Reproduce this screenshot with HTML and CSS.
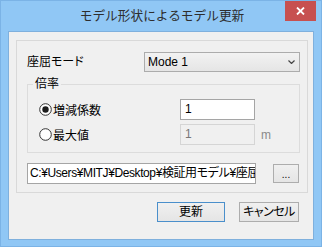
FILE: index.html
```html
<!DOCTYPE html>
<html lang="ja">
<head>
<meta charset="utf-8">
<title>モデル形状によるモデル更新</title>
<link rel="stylesheet" href="styles.css">
</head>
<body>
<div class="window">
  <div class="titlebar">
    <div class="title">モデル形状によるモデル更新</div>
    <div class="close">
      <svg width="9" height="8" viewBox="0 0 9 8"><path d="M1 0.5 L8 7.5 M8 0.5 L1 7.5" stroke="#fff" stroke-width="1.8" fill="none"/></svg>
    </div>
  </div>
  <div class="client">
    <div class="panel">
      <div class="mode-row">
        <span class="label">座屈モード</span>
        <div class="combo">
          <span class="combo-text">Mode 1</span>
          <svg class="chev" width="7" height="4" viewBox="0 0 7 4"><path d="M0.5 0.5 L3.5 3.5 L6.5 0.5" stroke="#444" stroke-width="1.2" fill="none"/></svg>
        </div>
      </div>
      <fieldset class="group">
        <legend class="legend">倍率</legend>
        <div class="opt first">
          <div class="opt-choice">
            <svg class="radio" width="13" height="13" viewBox="0 0 13 13"><circle cx="6.5" cy="6.5" r="5.8" fill="#fff" stroke="#333" stroke-width="1"/><circle cx="6.5" cy="6.5" r="3.2" fill="#1c1c1c"/></svg>
            <span class="opt-label">増減係数</span>
          </div>
          <div class="input">1</div>
        </div>
        <div class="opt">
          <div class="opt-choice">
            <svg class="radio" width="13" height="13" viewBox="0 0 13 13"><circle cx="6.5" cy="6.5" r="5.8" fill="#fff" stroke="#333" stroke-width="1"/></svg>
            <span class="opt-label">最大値</span>
          </div>
          <div class="input disabled">1</div>
          <span class="unit">m</span>
        </div>
      </fieldset>
      <div class="path-row">
        <div class="input path"><span class="path-text">C:¥Users¥MITJ¥Desktop¥検証用モデル¥座屈モード</span></div>
        <div class="btn browse">...</div>
      </div>
    </div>
    <div class="actions">
      <div class="btn default ok">更新</div>
      <div class="btn cancel">キャンセル</div>
    </div>
  </div>
</div>
</body>
</html>
```

FILE: styles.css
```css
html, body {
  margin: 0;
  padding: 0;
}
body {
  width: 322px;
  height: 247px;
  overflow: hidden;
  background: #90c7f5;
  font-family: "Liberation Sans", "Noto Sans CJK JP", sans-serif;
  font-size: 12px;
  font-feature-settings: "palt";
  color: #000;
}
.window {
  width: 322px;
  height: 247px;
  box-sizing: border-box;
  border: 1px solid #7bb3e6;
}
.titlebar {
  display: grid;
  height: 30px;
}
.title {
  grid-area: 1 / 1;
  justify-self: center;
  padding-top: 4px;
  padding-left: 2px;
  line-height: 20px;
  font-family: "Noto Sans CJK JP", sans-serif;
  font-feature-settings: normal;
  font-size: 12.7px;
  color: #2e2e2e;
}
.close {
  grid-area: 1 / 1;
  justify-self: end;
  align-self: start;
  width: 31px;
  height: 20px;
  margin-right: 5px;
  background: #c75050;
  display: flex;
  align-items: center;
  justify-content: center;
}
.client {
  box-sizing: border-box;
  margin-left: 7px;
  width: 306px;
  height: 209px;
  background: #f0f0f0;
  border: 1px solid #7fb0dd;
}
.panel {
  box-sizing: border-box;
  margin: 8px 0 0 7px;
  width: 292px;
  border: 1px solid #d9d9d9;
  padding: 11px 7px 8px 10px;
}
.mode-row {
  display: flex;
  align-items: center;
  height: 20px;
}
.label {
  line-height: 14px;
  white-space: nowrap;
}
.combo {
  margin-left: auto;
  box-sizing: border-box;
  width: 156px;
  height: 20px;
  border: 1px solid #acacac;
  background: linear-gradient(#f2f2f2, #e5e5e5);
  display: flex;
  align-items: center;
  padding: 0 4px 0 3px;
}
.combo-text {
  flex: 1;
}
.group {
  margin: 5px 0 0 0;
  padding: 0 0 7px 0;
  border: 1px solid #dcdcdc;
  min-width: 0;
}
.legend {
  margin-left: 5px;
  padding: 0 2px;
  line-height: 14px;
}
.opt {
  display: grid;
  grid-template-columns: 152px 75px auto;
  align-items: center;
  height: 21px;
  margin-top: 4px;
}
.opt.first {
  margin-top: 8px;
}
.opt-choice {
  display: flex;
  align-items: center;
  padding-left: 11px;
}
.radio {
  display: block;
}
.opt-label {
  margin-left: 1px;
  white-space: nowrap;
}
.input {
  box-sizing: border-box;
  height: 21px;
  border: 1px solid #a5a5a5;
  background: #fff;
  padding-left: 4px;
  line-height: 19px;
  white-space: nowrap;
  overflow: hidden;
}
.input.disabled {
  border-color: #d5d5d5;
  background: #f0f0f0;
  color: #777;
}
.unit {
  margin-left: 6px;
  color: #8a8a8a;
}
.path-row {
  display: flex;
  align-items: center;
  margin-top: 10px;
}
.input.path {
  width: 229px;
  flex: none;
  padding-left: 2px;
  letter-spacing: -0.4px;
}
.btn {
  box-sizing: border-box;
  height: 20px;
  border: 1px solid #adadad;
  background: linear-gradient(#f0f0f0, #e5e5e5);
  display: flex;
  align-items: center;
  justify-content: center;
  white-space: nowrap;
  line-height: 14px;
}
.browse {
  flex: none;
  width: 26px;
  height: 19px;
  margin-left: 17px;
  font-size: 10px;
  line-height: 8px;
  align-items: flex-end;
  padding-bottom: 3px;
}
.actions {
  display: flex;
  justify-content: flex-end;
  gap: 14px;
  margin-top: 9px;
  padding-right: 14px;
}
.ok {
  width: 68px;
  border-color: #4a8fcb;
}
.cancel {
  width: 60px;
  letter-spacing: -0.5px;
}
```
